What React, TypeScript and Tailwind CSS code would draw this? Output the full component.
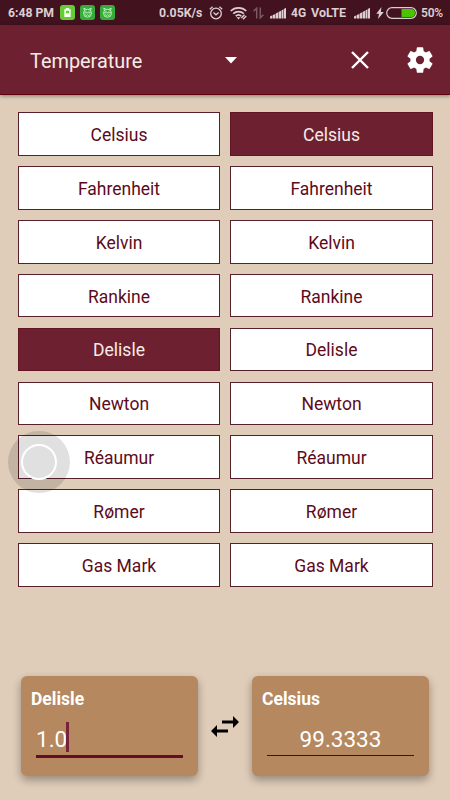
import React from "react";

const UNITS = ["Celsius", "Fahrenheit", "Kelvin", "Rankine", "Delisle", "Newton", "Réaumur", "Rømer", "Gas Mark"];

function Signal() {
  return (
    <svg viewBox="0 0 16 12" className="h-3 w-4 shrink-0" fill="#dccfd2">
      <path d="M0 11.500v-2l2.400-1.200v3.200zM2.900 11.500V8.100L5.300 6.900v4.600zM5.800 11.500V6.600l2.300-1.300v6.200zM8.600 11.500V5L11 3.700v7.800zM11.500 11.500V3.400l1.900-1.100v9.200zM13.900 11.500V2L16 .8v10.700z" />
    </svg>
  );
}

function Cat() {
  return (
    <svg viewBox="0 0 15 15" className="size-[15px] shrink-0">
      <rect width="15" height="15" rx="3" fill="#36ad3b" />
      <g fill="none" stroke="#c9f2c9" strokeWidth="0.9">
        <circle cx="7.500" cy="8.200" r="4" />
        <path d="M4.500 5.500 3.700 3.200l2.200.9M10.500 5.500l.8-2.300-2.200.9M3.700 7.800h7.600M5 9.600l1.500.9 1-.8 1 .8 1.500-.9M5.500 6.300h1M8.500 6.300h1" />
      </g>
    </svg>
  );
}

function StatusBar() {
  return (
    <div className="flex h-[25px] items-center whitespace-nowrap bg-[#42121f] pl-2 text-[12px] font-bold text-[#dccfd2]">
      <span className="w-[52px] shrink-0 pt-px text-[12.200px]">6:48 PM</span>
      <div className="flex w-[98px] shrink-0 gap-[5px]">
        <svg viewBox="0 0 15 15" className="size-[15px] shrink-0">
          <rect width="15" height="15" rx="3" fill="#66cc36" />
          <path d="M5.800 3h3.400v1.200h1.500V12H4.300V4.200h1.500z" fill="#f4fff0" />
          <path d="M6 5.800h3v2.400H6z" fill="#66cc36" />
        </svg>
        <Cat />
        <Cat />
      </div>
      <span className="w-[51px] shrink-0 pl-px pt-px text-[12.300px]">0.05K/s</span>
      <svg viewBox="0 0 14 14" className="mr-[7px] size-[14px] shrink-0" fill="none" stroke="#dccfd2" strokeWidth="1.300">
        <circle cx="7" cy="7.500" r="5.300" />
        <path d="M.8 3.200 3.600.8M13.200 3.200 10.400.8M4.500 6.500 7 8.800l2.600-2.300" />
      </svg>
      <svg viewBox="0 0 17 14" className="mr-[6px] h-[14px] w-[17px] shrink-0" fill="none" stroke="#dccfd2" strokeWidth="1.700">
        <path d="M.7 5c4.300-4.200 11.300-4.200 15.600 0M3.200 7.700c3-2.800 7.600-2.800 10.600 0M5.700 10.200c1.600-1.500 4-1.500 5.600 0" />
        <path d="M6.500 11.200h4L8.500 13.500z" fill="#dccfd2" stroke="none" />
        <path d="m11.300 12 3.200-3.200M13 13.200l3.200-3.200" strokeWidth="1.400" />
      </svg>
      <svg viewBox="0 0 11 12" className="mr-[6px] h-3 w-[11px] shrink-0" fill="none" stroke="#7e5963" strokeWidth="1.500">
        <path d="M.6 4.300 3.700 1.200v10.300M7.300.5v10.300l3.100-3.100" />
      </svg>
      <Signal />
      <span className="ml-[5px] w-5 shrink-0 pt-px text-[12px]">4G</span>
      <span className="w-[43px] shrink-0 pt-px text-[12.500px]">VoLTE</span>
      <Signal />
      <svg viewBox="0 0 8 12" className="ml-[6px] h-3 w-2 shrink-0" fill="#dccfd2">
        <path d="M5.500 0 .3 6.700h2.700L2 12l5.800-7H4.800z" />
      </svg>
      <svg viewBox="0 0 31 12" className="ml-[2px] h-3 w-[31px] shrink-0">
        <path d="M15.500 2H25a4 4 0 0 1 0 8h-9.500z" fill="#49c400" />
        <rect x=".7" y=".7" width="29.600" height="10.600" rx="5.300" fill="none" stroke="#dccfd2" strokeWidth="1.200" />
      </svg>
      <span className="ml-1 text-[12px] font-semibold tracking-[-0.2px]">50%</span>
    </div>
  );
}

function Toolbar() {
  return (
    <header className="relative flex h-[70px] items-center border-b border-[#61000e] bg-[#6d2130] pl-[30px] pr-[14px] pt-px shadow-[0_1px_4px_rgba(0,0,0,0.4)]">
      <span className="w-[195px] pt-[3px] text-[19.900px] text-[#f7ebe6]">Temperature</span>
      <svg viewBox="0 0 12 7" className="mt-px h-[7px] w-3" fill="#fff">
        <path d="M0 0h12L6 6.500z" />
      </svg>
      <svg viewBox="0 0 18 18" className="ml-auto mr-[35px] size-[18px]" fill="none" stroke="#fff" strokeWidth="2.400">
        <path d="m1 1 16 16M17 1 1 17" />
      </svg>
      <svg viewBox="0 0 24 24" className="size-8" fill="#fff">
        <path d="M19.140 12.940c.04-.3.060-.610.060-.940s-.020-.640-.070-.940l2.030-1.580a.49.49 0 0 0 .12-.610l-1.920-3.320a.488.488 0 0 0-.590-.220l-2.390.960c-.5-.380-1.030-.7-1.620-.940l-.360-2.540a.484.484 0 0 0-.480-.410h-3.840a.477.477 0 0 0-.470.410l-.360 2.540c-.590.240-1.130.570-1.620.940l-2.390-.960a.477.477 0 0 0-.590.220L2.740 8.870a.477.477 0 0 0 .12.610l2.030 1.580c-.050.3-.090.630-.090.940s.020.640.070.940l-2.030 1.580a.49.49 0 0 0-.12.610l1.920 3.320c.12.220.370.290.590.220l2.390-.960c.5.380 1.030.7 1.620.940l.360 2.540c.050.240.240.410.480.410h3.840c.240 0 .440-.170.470-.410l.360-2.540c.590-.240 1.130-.560 1.620-.940l2.390.960c.220.080.470 0 .590-.220l1.920-3.320a.477.477 0 0 0-.12-.610zM12 15.100a3.100 3.100 0 1 1 0-6.200 3.100 3.100 0 0 1 0 6.200z" />
      </svg>
    </header>
  );
}

function UnitColumn({ selected }: { selected: string }) {
  return (
    <div className="flex flex-col gap-[10.350px]">
      {UNITS.map((u) => (
        <button
          key={u}
          className={
            "flex h-[43.500px] w-full items-center justify-center border pt-[2px] text-[17.500px] " +
            (u === selected
              ? "border-[#611422] bg-[#6d2130] text-[#f7ebe6]"
              : "border-[#56202b] bg-white text-[#5d0b1b]")
          }
        >
          {u}
        </button>
      ))}
    </div>
  );
}

export default function App() {
  return (
    <div className="relative flex h-[800px] w-[450px] flex-col overflow-hidden bg-[#dfccb9] font-['Roboto','Liberation_Sans',sans-serif]">
      <StatusBar />
      <Toolbar />
      <main className="grid grid-cols-[202px_203px] gap-x-[10px] pl-[18px] pt-[17.400px]">
        <UnitColumn selected="Delisle" />
        <UnitColumn selected="Celsius" />
      </main>
      <div className="absolute left-2 top-[431px] flex size-[62px] items-center justify-center rounded-full bg-black/12">
        <div className="size-[36px] rounded-full border-2 border-white" />
      </div>
      <footer className="mb-6 mt-auto flex h-[100px] items-center pl-[21px] text-white">
        <section className="h-[100px] w-[177px] rounded-md bg-[#b58860] px-[10px] pt-[11px] shadow-[0_4px_8px_rgba(0,0,0,0.33)]">
          <h2 className="text-[17.500px] font-bold leading-6">Delisle</h2>
          <div className="mx-[5px] mt-[11px] flex h-[36px] w-[147px] items-start border-b-3 border-[#650c2b] text-[22.500px] leading-[34px]">
            <span className="w-[30px]">1.0</span>
            <i className="h-[30px] w-[3px] bg-[#75243a]" />
          </div>
        </section>
        <svg viewBox="0 0 28 21" className="mx-[13px] h-[21px] w-7" fill="#000">
          <path d="M11 4.500h11V0l6 6-6 6V7.500H11zM17 13.500H6V9l-6 6 6 6v-4.500h11z" />
        </svg>
        <section className="h-[100px] w-[177px] rounded-md bg-[#b58860] px-[10px] pt-[11px] shadow-[0_4px_8px_rgba(0,0,0,0.33)]">
          <h2 className="text-[17.500px] font-bold leading-6">Celsius</h2>
          <div className="mx-[5px] mt-[11px] h-[34px] w-[147px] border-b border-[#301b0e] text-center text-[22.500px] leading-[34px]">99.3333</div>
        </section>
      </footer>
    </div>
  );
}
